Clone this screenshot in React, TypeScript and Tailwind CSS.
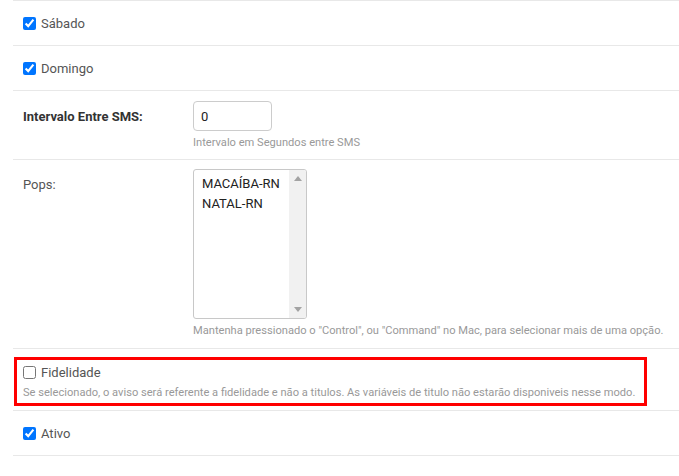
import React from 'react';

const font = { fontFamily: 'Roboto, "Liberation Sans", sans-serif' };

function CheckRow({ label, checked, first }: { label: string; checked: boolean; first?: boolean }) {
  return (
    <div
      className={`border-b border-[#e8e8e8] flex items-center px-[10px] ${first ? 'h-[46px] border-t' : 'h-[45px]'}`}
    >
      <label className="flex items-center gap-[5px] text-[13px] text-[#555]">
        <input type="checkbox" defaultChecked={checked} className="w-[13px] h-[13px] m-0 accent-[#0075ff]" />
        <span className="leading-[17px]">{label}</span>
      </label>
    </div>
  );
}

export default function App() {
  return (
    <div className="w-[679px] h-[476px] bg-white overflow-hidden" style={font}>
      <div className="pl-[13px]">
        <CheckRow label="Sábado" checked first />
        <CheckRow label="Domingo" checked />

        {/* Intervalo */}
        <div className="border-b border-[#e8e8e8] flex px-[10px] pt-[10px] pb-[9px]">
          <label className="w-[170px] pt-[7px] text-[13px] leading-[17px] font-bold text-[#333]">
            Intervalo Entre SMS:
          </label>
          <div>
            <input
              type="text"
              defaultValue="0"
              className="w-[79px] h-[30px] border border-[#ccc] rounded-[4px] px-[7px] text-[13px] text-[#222] outline-none"
            />
            <p className="mt-[4px] text-[11.12px] leading-[15px] text-[#999]">Intervalo em Segundos entre SMS</p>
          </div>
        </div>

        {/* Pops */}
        <div className="border-b border-[#e8e8e8] flex px-[10px] pt-[9px] pb-[10px]">
          <label className="w-[170px] pt-[7px] text-[13px] leading-[17px] text-[#555]">Pops:</label>
          <div>
            <div className="w-[114px] h-[150px] border border-[#c8c8c8] rounded-[3px] flex overflow-hidden">
              <div className="flex-1 pl-[8px] pt-[4px] text-[13px] leading-[20px] text-[#222]">
                <div>MACAÍBA-RN</div>
                <div>NATAL-RN</div>
              </div>
              <div className="w-[17px] bg-[#f1f1f1] flex flex-col justify-between items-center py-[6px]">
                <svg width="8" height="5" viewBox="0 0 8 5">
                  <path d="M0 5 L4 0 L8 5 Z" fill="#a3a3a3" />
                </svg>
                <svg width="8" height="5" viewBox="0 0 8 5">
                  <path d="M0 0 L4 5 L8 0 Z" fill="#a3a3a3" />
                </svg>
              </div>
            </div>
            <p className="mt-[4px] text-[11.12px] leading-[15px] text-[#999] whitespace-nowrap">
              Mantenha pressionado o "Control", ou "Command" no Mac, para selecionar mais de uma opção.
            </p>
          </div>
        </div>

        {/* Fidelidade */}
        <div className="border-b border-[#e8e8e8] pt-[8px] pb-[4px] pl-[1px] pr-[32px]">
          <div className="border-[3px] border-[#ff0000] pl-[6px] pt-[4px] pb-[3px]">
            <label className="flex items-center gap-[5px] text-[13px] text-[#555]">
              <input type="checkbox" className="w-[13px] h-[13px] m-0" />
              <span className="leading-[17px]">Fidelidade</span>
            </label>
            <p className="mt-[4px] text-[11.12px] leading-[15px] text-[#999] whitespace-nowrap">
              Se selecionado, o aviso será referente a fidelidade e não a titulos. As variáveis de titulo não estarão disponiveis nesse modo.
            </p>
          </div>
        </div>

        <CheckRow label="Ativo" checked />
      </div>
    </div>
  );
}
